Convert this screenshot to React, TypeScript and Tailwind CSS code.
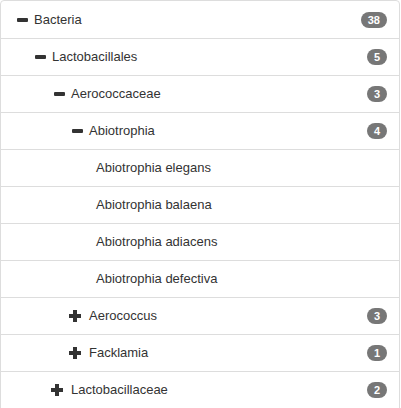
import React from "react";

type Node = { label: string; pl: string; icon?: "minus" | "plus"; badge?: string };

const rows: Node[] = [
  { label: "Bacteria", pl: "pl-[15px]", icon: "minus", badge: "38" },
  { label: "Lactobacillales", pl: "pl-[33px]", icon: "minus", badge: "5" },
  { label: "Aerococcaceae", pl: "pl-[52px]", icon: "minus", badge: "3" },
  { label: "Abiotrophia", pl: "pl-[70px]", icon: "minus", badge: "4" },
  { label: "Abiotrophia elegans", pl: "pl-[95px]" },
  { label: "Abiotrophia balaena", pl: "pl-[95px]" },
  { label: "Abiotrophia adiacens", pl: "pl-[95px]" },
  { label: "Abiotrophia defectiva", pl: "pl-[95px]" },
  { label: "Aerococcus", pl: "pl-[70px]", icon: "plus", badge: "3" },
  { label: "Facklamia", pl: "pl-[70px]", icon: "plus", badge: "1" },
  { label: "Lactobacillaceae", pl: "pl-[52px]", icon: "plus", badge: "2" },
];

function Icon({ kind }: { kind: "minus" | "plus" }) {
  return (
    <span className="w-[18px] h-[12px] shrink-0 flex items-center">
      {kind === "minus" ? (
        <span className="block ml-[1px] w-[11px] h-[4px] bg-[#333] rounded-[1px]" />
      ) : (
        <svg width="12" height="12" viewBox="0 0 12 12" className="-ml-[2px]">
          <rect x="4" y="0" width="4" height="12" fill="#333" />
          <rect x="0" y="4" width="12" height="4" fill="#333" />
        </svg>
      )}
    </span>
  );
}

export default function App() {
  return (
    <div className="w-[401px] h-[408px] overflow-hidden bg-white" style={{ fontFamily: '"Liberation Sans", Arial, sans-serif' }}>
      <div className="w-[400px] border border-[#ddd] rounded-t-[4px] bg-white">
        {rows.map((r, i) => (
          <div
            key={i}
            className={`h-[37px] flex items-center pr-[12px] ${r.pl} text-[13px] text-[#333] ${i > 0 ? "border-t border-[#ddd]" : ""}`}
          >
            {r.icon && <Icon kind={r.icon} />}
            <span className="flex-1">{r.label}</span>
            {r.badge && (
              <span className="h-[16px] px-[7px] rounded-full bg-[#777] text-white text-[11px] font-bold leading-[16px] flex items-center">
                {r.badge}
              </span>
            )}
          </div>
        ))}
      </div>
    </div>
  );
}
